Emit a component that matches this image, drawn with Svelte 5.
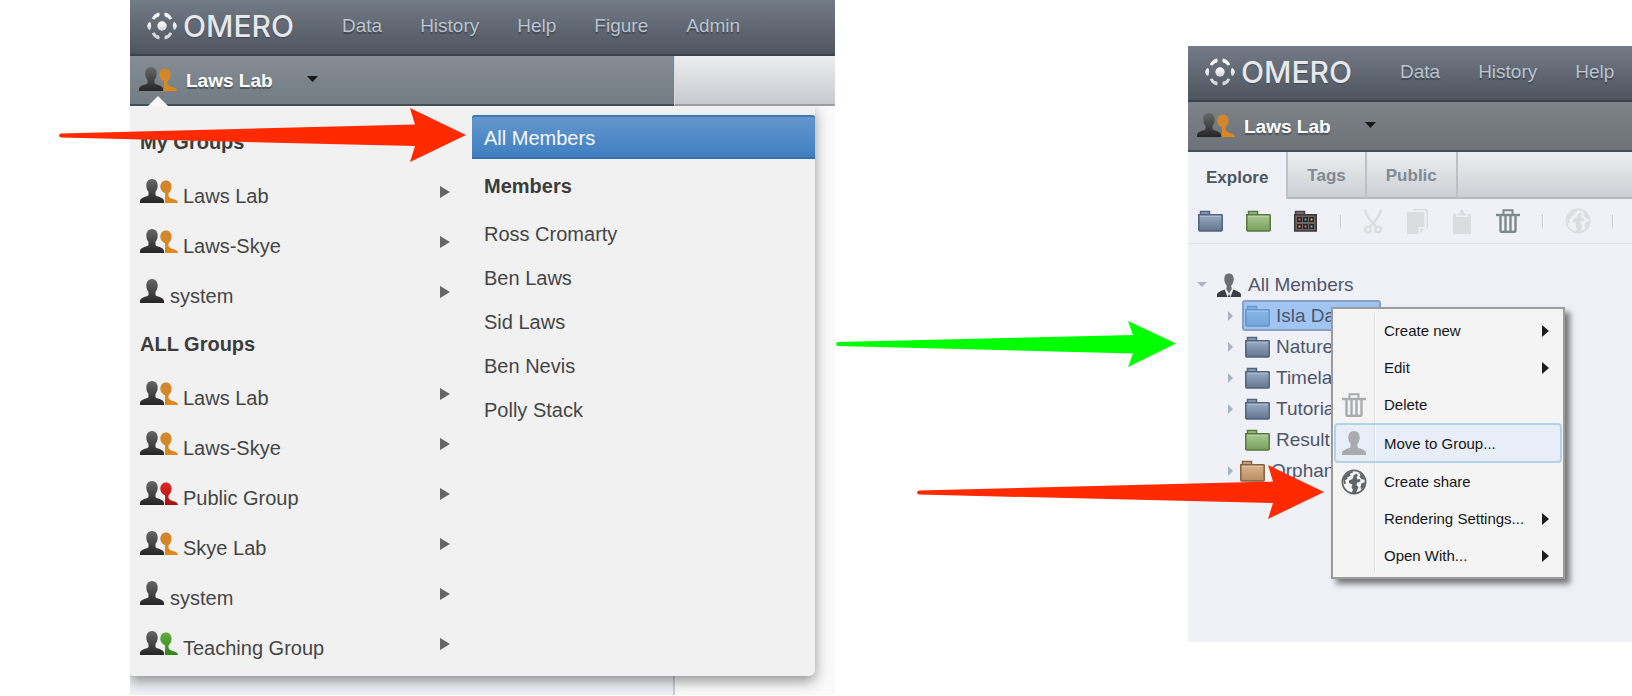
<script lang="ts">
  const leftNav = ['Data', 'History', 'Help', 'Figure', 'Admin'];
  const rightNav = ['Data', 'History', 'Help'];

  const sections = [
    {
      title: 'My Groups',
      groups: [
        { name: 'Laws Lab', tone: 'orange' },
        { name: 'Laws-Skye', tone: 'orange' },
        { name: 'system', tone: '' }
      ]
    },
    {
      title: 'ALL Groups',
      groups: [
        { name: 'Laws Lab', tone: 'orange' },
        { name: 'Laws-Skye', tone: 'orange' },
        { name: 'Public Group', tone: 'red' },
        { name: 'Skye Lab', tone: 'orange' },
        { name: 'system', tone: '' },
        { name: 'Teaching Group', tone: 'green' }
      ]
    }
  ];

  const members = ['Ross Cromarty', 'Ben Laws', 'Sid Laws', 'Ben Nevis', 'Polly Stack'];

  const tree = [
    { name: 'Isla Da', tone: 'sky', open: true, selected: true },
    { name: 'Nature', tone: 'blue', open: true },
    { name: 'Timela', tone: 'blue', open: true },
    { name: 'Tutoria', tone: 'blue', open: true },
    { name: 'Result', tone: 'green', open: false },
    { name: 'Orphan', tone: 'tan', open: true, outer: true }
  ];

  const actions = [
    { name: 'Create new', icon: '', more: true },
    { name: 'Edit', icon: '', more: true },
    { name: 'Delete', icon: 'trash', more: false },
    { name: 'Move to Group...', icon: 'person', more: false, active: true },
    { name: 'Create share', icon: 'globe', more: false },
    { name: 'Rendering Settings...', icon: '', more: true },
    { name: 'Open With...', icon: '', more: true }
  ];

  const personPath =
    'M12 0c3.500 0 5.700 2.800 5.700 6.400 0 2.900-1 5.200-2.200 6.400v2.600c0 1.200 1 1.600 2.600 2.200 2.800 1 5.900 1.900 5.900 4.700V24H0v-1.700c0-2.800 3.100-3.700 5.900-4.700 1.600-.6 2.600-1 2.600-2.200v-2.600C7.300 11.600 6.300 9.300 6.300 6.400 6.300 2.800 8.500 0 12 0z';
  const halfPath =
    'M26 1.500c3.400 0 5.600 2.700 5.600 6.200 0 2.800-1.300 5-2.800 6.300-.8 2.200-.2 4 1.500 5 3 1.400 7.500 1.500 7.700 5H25.200c-.8 0 .2-5-.2-9.800C22.300 13.200 20.300 11 20.300 7.700c0-3.500 2.300-6.200 5.700-6.200z';
  const arrowPaths = {
    long: 'M2 25.500 356 16.500 351 0 407 27 351 54 356 38 2 29.500Q0 29 0 27.500 0 26 2 25.500Z',
    green: 'M2 21 297 14 292 0 340 22.500 292 46 297 32.500 2 25Q0 24.500 0 23 0 21.500 2 21Z'
  };
</script>

<svg class="defs" width="0" height="0" aria-hidden="true">
  <defs>
    <linearGradient id="g-dark" x1="0" y1="0" x2="0" y2="1"><stop offset="0" stop-color="#686868" /><stop offset="1" stop-color="#252525" /></linearGradient>
    <linearGradient id="g-orange" x1="0" y1="0" x2="0" y2="1"><stop offset="0" stop-color="#cf8630" /><stop offset="1" stop-color="#de881c" /></linearGradient>
    <linearGradient id="g-red" x1="0" y1="0" x2="0" y2="1"><stop offset="0" stop-color="#dc2a25" /><stop offset="1" stop-color="#a81410" /></linearGradient>
    <linearGradient id="g-green" x1="0" y1="0" x2="0" y2="1"><stop offset="0" stop-color="#5fae3f" /><stop offset="1" stop-color="#2f861c" /></linearGradient>
    <linearGradient id="g-logo" x1="0" y1="0" x2="0" y2="1"><stop offset="0" stop-color="#ffffff" /><stop offset="1" stop-color="#cfd3d8" /></linearGradient>
    <linearGradient id="f-blue" x1="0" y1="0" x2="0" y2="1"><stop offset="0" stop-color="#9badc5" /><stop offset="1" stop-color="#64768f" /></linearGradient>
    <linearGradient id="f-sky" x1="0" y1="0" x2="0" y2="1"><stop offset="0" stop-color="#88b6e6" /><stop offset="1" stop-color="#76a5da" /></linearGradient>
    <linearGradient id="f-green" x1="0" y1="0" x2="0" y2="1"><stop offset="0" stop-color="#a9ca90" /><stop offset="1" stop-color="#7a9f60" /></linearGradient>
    <linearGradient id="f-tan" x1="0" y1="0" x2="0" y2="1"><stop offset="0" stop-color="#dbb690" /><stop offset="1" stop-color="#b78c63" /></linearGradient>
  </defs>
</svg>

{#snippet people(tone)}
  <svg class="glyph" width={tone ? 38 : 25} height="24" viewBox="0 0 {tone ? 38 : 25} 24" aria-hidden="true">
    <path d={personPath} fill="url(#g-dark)" />
    {#if tone}<path d={halfPath} fill="url(#g-{tone})" />{/if}
  </svg>
{/snippet}

{#snippet folder(tone)}
  <svg class="glyph folder {tone}" width="25" height="22" viewBox="0 0 25 22" aria-hidden="true">
    <path d="M2.500 6V1.500h9V5" fill="url(#f-{tone})" stroke="currentColor" stroke-width="1.500" />
    <path d="M1 4.700h22.500q.7 0 .7.700V20q0 1-1 1H1.800q-1 0-1-1V4.700z" fill="url(#f-{tone})" stroke="currentColor" stroke-width="1.500" />
    <path d="M2 6.200h21" stroke="#fff" stroke-opacity=".3" />
  </svg>
{/snippet}

{#snippet trash()}
  <svg class="glyph" width="24" height="24" viewBox="0 0 24 24" fill="none" stroke="currentColor" aria-hidden="true">
    <path d="M7.500 5V1.200h9V5" stroke-width="2" />
    <path d="M0 6h24" stroke-width="2.400" />
    <path d="M4.500 7v14.500q0 1.500 1.500 1.500h12q1.500 0 1.500-1.500V7M9.500 7v15M14.500 7v15" stroke-width="2.400" />
    <path d="M5 22.800h14" stroke-width="2" />
  </svg>
{/snippet}

{#snippet globe()}
  <svg class="glyph" width="26" height="26" viewBox="0 0 26 26" aria-hidden="true">
    <circle cx="13" cy="13" r="11.600" fill="none" stroke="currentColor" stroke-width="1.700" />
    <path fill="currentColor" d="M2 9 6.500 4l5-2.200.5 1.700-3 1.300.5 2L6 8.500l.5 1.500-2.500 1 1 3.500-2 .5z" />
    <path fill="currentColor" d="M8 11.500 11.500 10l1.500-4 2.500-1.500L17 7l-1.500 1 1 2.500 2.500-.5.500 2.500-3.500 1-.5 3 2 1.500-1.500 3.500-1 2.500h-4.500l1.500-3-1.500-3 1-2.500-3.500-1.500z" />
    <path fill="currentColor" d="M17 2.500 21.500 6 24 11l-3.500-1-2-2.500 1-1.500zM20.500 14.500 24 13l-.5 4-3 4-1-3z" />
  </svg>
{/snippet}

{#snippet wedge()}
  <svg class="wedge" width="10" height="26" viewBox="0 0 10 26" aria-hidden="true"><path d="M0 7l10 6-10 6z" fill="currentColor" /></svg>
{/snippet}

{#snippet masthead(links)}
  <header class="masthead">
    <a class="brand" href="#home">
      <svg width="30" height="28" viewBox="0 0 30 28" fill="url(#g-logo)" aria-hidden="true">
        <circle cx="15" cy="14" r="4.700" />
        <path d="M3 9.800q2.400 4.200 0 8.400Q.5 17 0 14 .5 11 3 9.800zM27 9.800q-2.400 4.200 0 8.400 2.500-1.200 3-4.200-.5-3-3-4.200z" />
        <path d="M4.800 6.400Q7 1.500 12.200.4q1 3-.3 4-3.300.6-4.600 3.400zM25.200 6.400Q23 1.500 17.800.4q-1 3 .3 4 3.300.6 4.600 3.400zM4.800 21.600q2.200 4.900 7.400 6 1-3-.3-4-3.300-.6-4.600-3.400zM25.200 21.600q-2.200 4.900-7.400 6-1-3 .3-4 3.300-.6 4.600-3.400z" />
      </svg>
      <span>OMERO</span>
    </a>
    <nav>
      {#each links as link}<a href="#{link}">{link}</a>{/each}
    </nav>
  </header>
{/snippet}

{#snippet switcher()}
  <button class="switcher" type="button">
    {@render people('orange')}
    <span>Laws Lab</span>
    <svg class="caret" width="11" height="6" viewBox="0 0 11 6" aria-hidden="true"><path d="M0 0h11L5.500 6z" fill="#16181a" /></svg>
  </button>
{/snippet}

<main class="page">
  <div class="stage first">
    <section class="app">
      {@render masthead(leftNav)}
      <div class="subbar split">
        <div class="group-bar notched">{@render switcher()}</div>
        <div class="side-bar"></div>
      </div>
      <div class="workspace">
        <div class="dropdown">
          <div class="groups">
            {#each sections as section}
              <h2>{section.title}</h2>
              {#each section.groups as group}
                <button class="group" type="button">
                  {@render people(group.tone)}
                  <span>{group.name}</span>
                  {@render wedge()}
                </button>
              {/each}
            {/each}
          </div>
          <div class="members">
            <button class="member chosen" type="button">All Members</button>
            <h2>Members</h2>
            {#each members as member}
              <button class="member" type="button">{member}</button>
            {/each}
          </div>
        </div>
      </div>
    </section>
    <svg class="pointer to-members" width="407" height="54" viewBox="0 0 407 54" aria-hidden="true"><path d={arrowPaths.long} fill="#ff2a00" /></svg>
  </div>

  <div class="between">
    <svg width="340" height="46" viewBox="0 0 340 46" aria-hidden="true"><path d={arrowPaths.green} fill="#00ff00" /></svg>
  </div>

  <div class="stage second">
    <section class="app explorer">
      {@render masthead(rightNav)}
      <div class="subbar"><div class="group-bar deep">{@render switcher()}</div></div>
      <div class="tabs" role="tablist">
        <button class="tab current" type="button" role="tab" aria-selected="true">Explore</button>
        <button class="tab" type="button" role="tab" aria-selected="false">Tags</button>
        <button class="tab" type="button" role="tab" aria-selected="false">Public</button>
        <span class="tab-fill"></span>
      </div>
      <div class="toolbar">
        <div class="tools create">
          <button type="button" aria-label="New project">{@render folder('blue')}</button>
          <button type="button" aria-label="New dataset">{@render folder('green')}</button>
          <button type="button" aria-label="New screen">
            <svg class="glyph" width="23" height="22" viewBox="1 0 23 22" aria-hidden="true">
              <path d="M2.500 5V1.500h9V5" fill="#81706f" stroke="#4a4142" stroke-width="1.500" />
              <path d="M1.700 4.700h21.600V21H1.700z" fill="#6b6462" stroke="#3c3839" stroke-width="1.500" />
              <g fill="#292728"><path d="M4 7h5v5H4zM10 7h5v5h-5zM16 7h5v5h-5zM4 14h5v5H4zM10 14h5v5h-5zM16 14h5v5h-5z" /></g>
              <path d="M5.500 8.500h2v2h-2z" fill="#dc5b50" /><path d="M11.500 8.500h2v2h-2z" fill="#58a9c0" /><path d="M17.500 8.500h2v2h-2z" fill="#c8b841" />
              <path d="M5.500 15.500h2v2h-2z" fill="#d6a63b" /><path d="M11.500 15.500h2v2h-2z" fill="#b866b8" /><path d="M17.500 15.500h2v2h-2z" fill="#58b4c0" />
            </svg>
          </button>
          <i class="rule"></i>
        </div>
        <div class="tools edit">
          <button class="off" type="button" aria-label="Cut">
            <svg class="glyph" width="18" height="25" viewBox="0 0 18 25" fill="none" stroke="currentColor" aria-hidden="true">
              <path d="M1 .5Q2 8 12.500 18M17 .5Q16 8 5.500 18" stroke-width="2.200" />
              <circle cx="4" cy="20.500" r="2.900" stroke-width="2.200" /><circle cx="14" cy="20.500" r="2.900" stroke-width="2.200" />
            </svg>
          </button>
          <button class="off" type="button" aria-label="Copy">
            <svg class="glyph" width="21" height="25" viewBox="0 0 21 25" aria-hidden="true">
              <path d="M6 .8h13.500q.7 0 .7.700V20" fill="none" stroke="currentColor" stroke-width="1.500" />
              <path d="M0 4q0-1 1-1h16.500v15h-6v7H1q-1 0-1-1zM13 19.500h4.500L13 24.500z" fill="currentColor" />
            </svg>
          </button>
          <button class="off" type="button" aria-label="Paste">
            <svg class="glyph" width="18" height="25" viewBox="0 0 18 25" aria-hidden="true">
              <path d="M0 5h3.500v3h11V5H18v20H0z" fill="currentColor" />
              <path d="M5 6.500V4.500h2.200V2.500Q7.200.5 9 .5t1.800 2v2H13v2z" fill="currentColor" />
            </svg>
          </button>
          <button class="on" type="button" aria-label="Delete">{@render trash()}</button>
        </div>
        <div class="tools share">
          <i class="rule"></i>
          <button class="off" type="button" aria-label="Share">{@render globe()}</button>
          <i class="rule"></i>
        </div>
      </div>
      <ul class="tree">
        <li class="root">
          <svg class="twist" width="10" height="5" viewBox="0 0 10 5" aria-hidden="true"><path d="M0 0h10L5 5z" fill="#a9b3c3" /></svg>
          <svg class="glyph" width="24" height="24" viewBox="0 0 24 24" aria-hidden="true">
            <path d="M12 .5c3 0 4.700 2.200 4.700 5.500 0 3-1.200 5.400-2.500 6.700L14.800 16 12 20.500 9.200 16l.6-3.300C8.500 11.400 7.300 9 7.300 6 7.300 2.700 9 .5 12 .5z" fill="#6b6f73" />
            <path d="M0 24v-2.500C0 19 4.500 18 7.700 16.500L10.500 24zM24 24v-2.500c0-2.500-4.500-3.500-7.700-5L13.500 24zM12 20.500l1.200 3.500h-2.400z" fill="#3b3e42" />
          </svg>
          <span>All Members</span>
        </li>
        {#each tree as node}
          <li class:outer={node.outer}>
            <svg class="twist" width="5" height="10" viewBox="0 0 5 10" aria-hidden="true">
              {#if node.open}<path d="M0 0l5 5-5 5z" fill="#a9b3c3" />{/if}
            </svg>
            <span class="node" class:selected={node.selected}>
              {@render folder(node.tone)}
              <span>{node.name}</span>
            </span>
          </li>
        {/each}
      </ul>
    </section>

    <div class="context" role="menu">
      {#each actions as action}
        <button class="action" class:active={action.active} type="button" role="menuitem">
          <span class="slot {action.icon}">
            {#if action.icon === 'trash'}{@render trash()}
            {:else if action.icon === 'globe'}{@render globe()}
            {:else if action.icon === 'person'}
              <svg class="glyph" width="24" height="24" viewBox="0 0 24 24" aria-hidden="true"><path d={personPath} fill="currentColor" /></svg>
            {/if}
          </span>
          <span class="label">{action.name}</span>
          {#if action.more}
            <svg width="7" height="12" viewBox="0 0 7 12" aria-hidden="true"><path d="M0 0l7 6-7 6z" fill="#1c1c1c" /></svg>
          {/if}
        </button>
      {/each}
    </div>
    <svg class="pointer to-action" width="407" height="54" viewBox="0 0 407 54" aria-hidden="true"><path d={arrowPaths.long} fill="#ff2a00" /></svg>
  </div>
</main>

<style>
  :global(body) {
    margin: 0;
    background: #fff;
    overflow-x: hidden;
  }

  .defs { position: absolute; }

  .page {
    display: grid;
    grid-template-columns: 130fr 705fr 353fr 444fr;
    align-items: start;
    overflow: hidden;
    font: 20px "Liberation Sans", Arial, sans-serif;
    color: #454545;
  }

  button {
    margin: 0;
    padding: 0;
    border: 0;
    background: none;
    font: inherit;
    color: inherit;
    text-align: left;
    white-space: nowrap;
  }

  a { text-decoration: none; }
  svg { flex: none; }

  .stage { position: relative; }
  .first { grid-column: 2; }
  .between { grid-column: 3; padding: 321px 0 0 1px; }
  .second { grid-column: 4; margin-top: 46px; }
  .app { overflow: hidden; }

  .masthead {
    display: flex;
    align-items: center;
    gap: 44px;
    height: 54px;
    padding-left: 17px;
    border-bottom: 2px solid #39414b;
    background: linear-gradient(#737b87, #4f555e);
  }

  .masthead nav {
    display: flex;
    gap: 38px;
    padding-bottom: 2px;
    font-size: 19px;
    line-height: 50px;
  }

  .masthead nav a {
    color: #b9c3cf;
    text-shadow: 0 2px 1px #3f4650;
  }

  .brand {
    display: flex;
    flex: none;
    align-items: center;
    gap: 6px;
    width: 151px;
    padding-bottom: 2px;
    color: #e6e8eb;
    font: 500 30px/50px Inter, sans-serif;
    text-shadow: 0 1px 1px #3f4650;
  }

  .subbar {
    position: relative;
    z-index: 1;
    display: flex;
  }

  .group-bar {
    position: relative;
    flex: 1;
    height: 48px;
    border-bottom: 2px solid #444e59;
    background: linear-gradient(#858c94, #737c83);
  }

  .group-bar.deep { background: linear-gradient(#7e838a, #6d7279); }

  .notched::after {
    content: "";
    position: absolute;
    left: 18px;
    bottom: -2px;
    border: 10px solid transparent;
    border-top: 0;
    border-bottom-color: #f8f8f8;
  }

  .side-bar {
    width: 160px;
    border-left: 1px solid #d8dbdf;
    border-bottom: 2px solid #9b9da0;
    background: linear-gradient(#ecedf0, #c6cacf);
  }

  .switcher {
    display: flex;
    align-items: center;
    height: 46px;
    padding-left: 9px;
    color: #fff;
    font-size: 19px;
    font-weight: bold;
    text-shadow: 0 2px 1px #4d545b;
  }

  .switcher span {
    margin: 0 34px 0 9px;
    padding-top: 3px;
  }

  .workspace {
    padding: 0 20px 19px 0;
    background: linear-gradient(to right, #eff1f6 calc(100% - 162px), #c8ccd6 calc(100% - 162px) calc(100% - 160px), #fafafa calc(100% - 160px));
  }

  .dropdown {
    display: grid;
    grid-template-columns: 342px 1fr;
    padding-bottom: 7px;
    border-radius: 0 4px 6px 3px;
    background: #f1f1f1;
    box-shadow: 0 5px 14px rgba(0, 0, 0, 0.42);
  }

  .groups {
    display: flex;
    flex-direction: column;
    padding: 9px 22px 0 10px;
  }

  h2 {
    margin: 0;
    padding-top: 2px;
    color: #3c3c3c;
    font-size: 20px;
    line-height: 50px;
  }

  .group {
    display: flex;
    align-items: baseline;
    gap: 5px;
    height: 50px;
    padding-top: 12px;
    line-height: 24px;
  }

  .wedge {
    align-self: flex-start;
    margin-left: auto;
    color: #666;
  }

  .members {
    display: flex;
    flex-direction: column;
    padding-top: 9px;
  }

  .members h2 { padding-left: 12px; }

  .member {
    padding: 2px 0 0 12px;
    line-height: 42px;
  }

  .member.chosen {
    border-radius: 3px 3px 0 0;
    background: linear-gradient(#6598cd, #3f7ec0);
    box-shadow: inset 0 2px #4079b6, inset 0 -2px #3571af;
    color: #f4f8fc;
  }

  .pointer {
    position: absolute;
    z-index: 3;
  }

  .to-members { left: -71px; top: 108px; }
  .to-action { left: -271px; top: 419px; }

  .explorer { background: #f0f1f6; }

  .tabs {
    display: flex;
    color: #7f8a95;
    font-size: 17px;
    font-weight: bold;
    line-height: 42px;
    text-shadow: 0 1px #fff;
  }

  .tab, .tab-fill {
    padding: 3px 19px 0;
    border-right: 2px solid #bcc1c7;
    border-bottom: 2px solid #b5babf;
    background: linear-gradient(#edeef1, #ccd0d4);
  }

  .tab.current {
    padding: 5px 18px 0;
    border-bottom: 0;
    background: #f0f1f6;
    color: #4c565f;
  }

  .tab-fill { flex: 1; border-right: 0; }

  .toolbar {
    display: flex;
    gap: 22px;
    height: 44px;
    padding-left: 10px;
    border-bottom: 1px solid #dde1e6;
  }

  .tools {
    display: flex;
    align-items: center;
  }

  .create { gap: 23px; }
  .edit { gap: 25px; }
  .share { gap: 21px; }

  .toolbar button { display: block; }
  .glyph { display: block; }
  .off { color: #d9dde0; }
  .on { color: #7f888e; }

  .rule {
    width: 1px;
    height: 13px;
    border-right: 1px solid #fff;
    background: #c3c8ce;
  }

  .folder.blue { color: #50627d; }
  .folder.sky { color: #6694cb; }
  .folder.green { color: #56783d; }
  .folder.tan { color: #84623f; }

  .tree {
    margin: 0;
    padding: 25px 0 156px;
    list-style: none;
    color: #4d566b;
    font-size: 19px;
    line-height: 31px;
  }

  .tree li {
    display: flex;
    align-items: center;
    height: 31px;
    padding-left: 40px;
  }

  .tree .root { padding-left: 9px; gap: 10px; }
  .root span { margin-left: -3px; }

  .node {
    display: flex;
    align-items: center;
    gap: 6px;
    margin-left: 10px;
    padding-left: 2px;
  }

  .outer .node { margin-left: 5px; }

  .node.selected {
    box-sizing: border-box;
    width: 139px;
    height: 31px;
    margin-left: 9px;
    padding-left: 1px;
    border: 2px solid #8b9fc4;
    border-radius: 3px;
    background: #a1c5f2;
    line-height: 27px;
  }

  .context {
    position: absolute;
    z-index: 2;
    left: 143px;
    top: 261px;
    display: flex;
    flex-direction: column;
    width: 230px;
    padding: 3px 0;
    border: 2px solid #9c9c9c;
    background: linear-gradient(to right, transparent 41px, #dcdcdc 41px 42px, #fff 42px 43px, transparent 43px) 0 4px / 100% calc(100% - 8px) no-repeat #f4f4f4;
    box-shadow: 5px 5px 6px rgba(0, 0, 0, 0.5);
    color: #161616;
    font-size: 15px;
    line-height: 37px;
  }

  .action {
    display: flex;
    align-items: center;
    height: 37px;
    padding: 0 14px 0 3px;
  }

  .action.active {
    box-sizing: border-box;
    height: 40px;
    margin: 0 1px;
    padding-left: 0;
    border: 2px solid #b3d2e4;
    border-radius: 4px;
    background: linear-gradient(to right, transparent 38px, #d5dae0 38px 39px, #fff 39px 40px, transparent 40px) #e7eef7;
  }

  .slot {
    display: grid;
    place-items: center;
    width: 36px;
    margin-right: 12px;
    color: #a9abad;
  }

  .slot.globe { color: #5f6468; }
  .label { flex: 1; }
</style>
